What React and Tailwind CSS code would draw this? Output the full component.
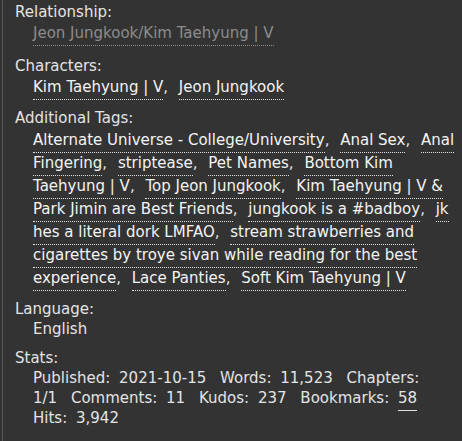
import React from "react";

const tags = [
  "Alternate Universe - College/University",
  "Anal Sex",
  "Anal Fingering",
  "striptease",
  "Pet Names",
  "Bottom Kim Taehyung | V",
  "Top Jeon Jungkook",
  "Kim Taehyung | V & Park Jimin are Best Friends",
  "jungkook is a #badboy",
  "jk hes a literal dork LMFAO",
  "stream strawberries and cigarettes by troye sivan while reading for the best experience",
  "Lace Panties",
  "Soft Kim Taehyung | V",
];

const characters = ["Kim Taehyung | V", "Jeon Jungkook"];

const TagList = ({ items, linkClass = "text-[#f4f4f4] border-[#e0e0e0]" }) => (
  <div className="pl-[30px] pr-[2px]">
    {items.map((t, i) => (
      <span key={t}>
        <a className={`border-b border-dotted pb-[3px] ${linkClass}`}>{t}</a>
        {i < items.length - 1 && <span className="mr-[6px]">,</span>}{" "}
      </span>
    ))}
  </div>
);

const Stat = ({ label, value, link }) => (
  <>
    <span className="mr-[4px]">{label}:</span>{" "}
    <span className={`mr-[9px] ${link ? "border-b border-[#e0e0e0] pb-[3px]" : ""}`}>{value}</span>{" "}
  </>
);

export default function App() {
  return (
    <div
      className="min-h-screen bg-[#333333] text-[#e4e4e4] text-[15px]"
      style={{ fontFamily: '"DejaVu Sans", "Liberation Sans", sans-serif' }}
    >
      <div className="ml-[2px] min-h-screen border-l border-[#5a5a5a] pt-[2px]">
        <div className="pl-[12px] leading-[20px]">Relationship:</div>
        <div className="leading-[22px]">
          <TagList items={["Jeon Jungkook/Kim Taehyung | V"]} linkClass="text-[#8c8c8c] border-[#8c8c8c]" />
        </div>

        <div className="pl-[12px] leading-[20px] mt-[12px]">Characters:</div>
        <div className="leading-[22px]">
          <TagList items={characters} />
        </div>

        <div className="pl-[12px] leading-[20px] mt-[10px]">Additional Tags:</div>
        <div className="leading-[23px] mt-[1px]">
          <TagList items={tags} />
        </div>

        <div className="pl-[12px] leading-[20px] mt-[9px]">Language:</div>
        <div className="pl-[30px] leading-[20px]">English</div>

        <div className="pl-[12px] leading-[20px] mt-[9px]">Stats:</div>
        <div className="pl-[30px] pr-[8px] leading-[20px]">
          <Stat label="Published" value="2021-10-15" />
          <Stat label="Words" value="11,523" />
          <Stat label="Chapters" value="1/1" />
          <Stat label="Comments" value="11" />
          <Stat label="Kudos" value="237" />
          <Stat label="Bookmarks" value="58" link />
          <Stat label="Hits" value="3,942" />
        </div>
      </div>
    </div>
  );
}
